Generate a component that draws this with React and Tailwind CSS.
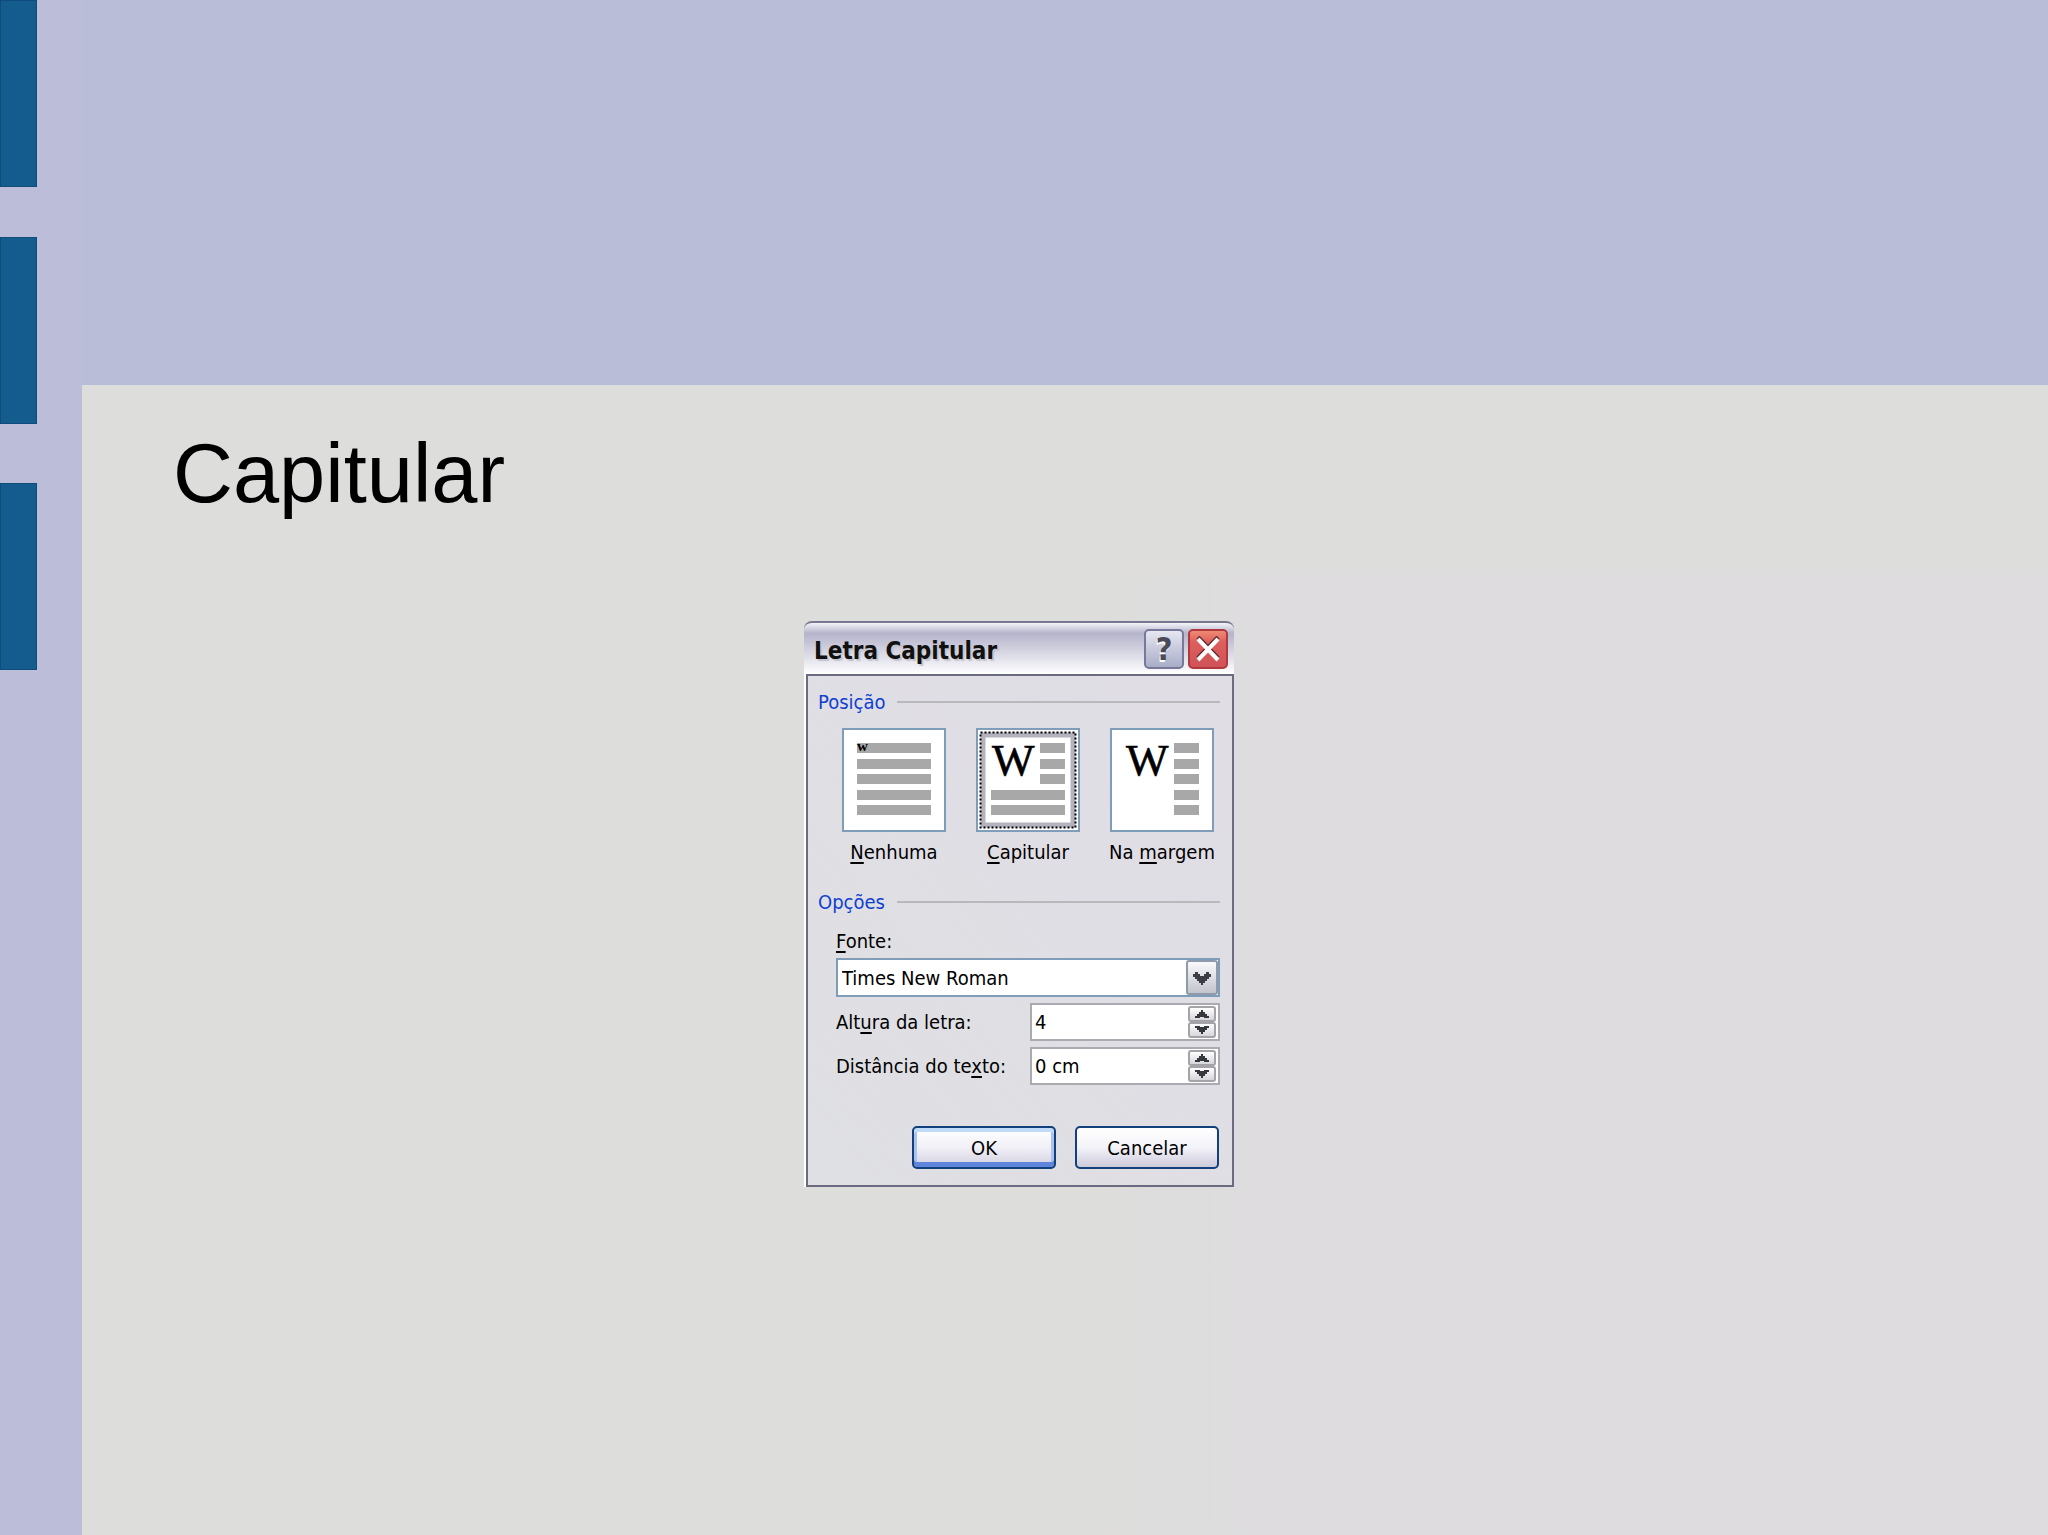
import React, { useState } from "react";

const POSITIONS = [
  { id: "none", before: "", key: "N", after: "enhuma" },
  { id: "dropped", before: "", key: "C", after: "apitular" },
  { id: "margin", before: "Na ", key: "m", after: "argem" },
];

const ROWS = [15, 31, 46, 62, 77];

function Mnemonic({ before = "", letter, after }) {
  return (
    <>
      {before}
      <span className="underline decoration-2 underline-offset-[3px]">{letter}</span>
      {after}
    </>
  );
}

function PositionPicture({ id, selected }) {
  return (
    <svg viewBox="0 0 104 104" className="block size-[104px]" aria-hidden="true">
      <rect x="1" y="1" width="102" height="102" fill="#fff" stroke="#7f9db9" strokeWidth="2" />
      {selected && (
        <>
          <rect x="7" y="7" width="90" height="90" fill="none" stroke="#b3b2bd" strokeWidth="5" />
          <rect
            x="4.5"
            y="4.5"
            width="95"
            height="95"
            fill="none"
            stroke="#000"
            strokeWidth="2"
            strokeDasharray="2 2"
          />
        </>
      )}
      {ROWS.map((y, idx) => {
        const short = id === "margin" || (id === "dropped" && idx < 3);
        return (
          <rect key={y} x={short ? 64 : 15} y={y} width={short ? 25 : 74} height="10" fill="#a8a8a8" />
        );
      })}
      {id === "none" ? (
        <text x="15" y="23" fontFamily="Liberation Serif" fontWeight="bold" fontSize="15">
          w
        </text>
      ) : (
        <text
          x="16"
          y="47"
          fontFamily="Liberation Serif"
          fontSize="45"
          stroke="#000"
          strokeWidth="0.6"
        >
          W
        </text>
      )}
    </svg>
  );
}

function SectionTitle({ children }) {
  return (
    <div className="flex items-center gap-3">
      <h2 className="text-[#0f3fd0]">{children}</h2>
      <div className="h-[2px] flex-1 bg-[#b9b9bb]" />
    </div>
  );
}

function SpinButton({ up, label, onClick }) {
  return (
    <button
      type="button"
      aria-label={label}
      onClick={onClick}
      className="flex h-4 w-7 items-center justify-center rounded-[3px] border-2 border-[#a3a3a8] bg-linear-to-b from-white to-[#d6d6dc]"
    >
      <svg viewBox="0 0 14 8" className="h-2 w-[14px]" aria-hidden="true">
        <path
          d={up ? "M6 0h2v2h2v2h2v2h2v2H9V7H5v1H0V6h2V4h2V2h2z" : "M6 8h2V6h2V4h2V2h2V0H9v1H5V0H0v2h2v2h2v2h2z"}
          fill="#35383d"
        />
      </svg>
    </button>
  );
}

function Spinner({ id, value, onChange, onStep }) {
  return (
    <div className="flex h-[38px] w-[190px] items-center border-2 border-[#a9abb0] bg-white pr-[2px]">
      <input
        id={id}
        type="text"
        value={value}
        onChange={(e) => onChange(e.target.value)}
        className="min-w-0 flex-1 bg-transparent pl-[3px] outline-none"
      />
      <div className="flex flex-col">
        <SpinButton up label="Aumentar" onClick={() => onStep(1)} />
        <SpinButton label="Diminuir" onClick={() => onStep(-1)} />
      </div>
    </div>
  );
}

function DropCapDialog() {
  const [position, setPosition] = useState("dropped");
  const [font, setFont] = useState("Times New Roman");
  const [lines, setLines] = useState("4");
  const [distance, setDistance] = useState("0 cm");

  return (
    <section
      aria-label="Letra Capitular"
      className="w-[430px] font-['DejaVu_Sans_Condensed','DejaVu_Sans',sans-serif] text-[20px] leading-6 text-black"
    >
      <header className="flex h-[53px] items-center gap-1 rounded-t-lg border-t-2 border-[#77778f] bg-linear-to-b from-[#f4f4fa] via-[#b5b4cb] via-20% to-white pr-[6px] pl-[10px]">
        <h2 className="flex-1 pt-1 text-[24px] font-bold text-[#111] [text-shadow:2px_2px_1px_#c4c4cc]">
          Letra Capitular
        </h2>
        <button
          type="button"
          aria-label="Ajuda"
          className="flex size-10 items-center justify-center rounded-[5px] border-2 border-[#77789a] bg-linear-to-b from-[#e6e7f1] to-[#a9adc8] text-[32px] font-bold text-[#4a4a58] [text-shadow:-1px_2px_0_#fff]"
        >
          ?
        </button>
        <button
          type="button"
          aria-label="Fechar"
          className="flex size-10 items-center justify-center rounded-[5px] border-2 border-[#b0383f] bg-linear-to-b from-[#f08a74] via-[#dd5f5c] via-30% to-[#cf5358]"
        >
          <svg viewBox="0 0 26 26" className="size-[26px]" aria-hidden="true">
            <path d="M3 1 23 22M23 1 3 22" fill="none" stroke="#5b2a30" strokeWidth="4" />
            <path d="M3 3 23 24M23 3 3 24" fill="none" stroke="#fff" strokeWidth="4" />
          </svg>
        </button>
      </header>

      <div className="border-l-2 border-white">
        <div className="border-2 border-[#6a6a80] bg-linear-to-tr from-[#dfe0e3] to-[#e0dde5] pt-[14px] pr-3 pb-4 pl-[10px]">
          <SectionTitle>Posição</SectionTitle>
          <fieldset aria-label="Posição" className="mt-[14px] flex justify-between pr-[6px] pl-6">
            {POSITIONS.map((p) => (
              <label
                key={p.id}
                className="flex w-[104px] flex-col items-center gap-2 whitespace-nowrap"
              >
                <input
                  type="radio"
                  name="position"
                  className="sr-only"
                  checked={position === p.id}
                  onChange={() => setPosition(p.id)}
                />
                <PositionPicture id={p.id} selected={position === p.id} />
                <span>
                  <Mnemonic before={p.before} letter={p.key} after={p.after} />
                </span>
              </label>
            ))}
          </fieldset>

          <div className="mt-[26px]">
            <SectionTitle>Opções</SectionTitle>
          </div>
          <div className="mt-[15px] flex flex-col pl-[18px]">
            <label htmlFor="font">
              <Mnemonic letter="F" after="onte:" />
            </label>
            <div className="relative mt-[5px] h-[39px] border-2 border-[#7f9db9] bg-white">
              <select
                id="font"
                value={font}
                onChange={(e) => setFont(e.target.value)}
                className="size-full appearance-none bg-transparent pl-1 outline-none"
              >
                <option>Times New Roman</option>
                <option>Arial</option>
              </select>
              <span className="pointer-events-none absolute top-0 right-0 flex h-[35px] w-8 items-center justify-center rounded-[3px] border-2 border-[#8f9bab] bg-linear-to-b from-[#fafafc] to-[#c3c4cd]">
                <svg viewBox="0 0 18 14" className="h-[14px] w-[18px]" aria-hidden="true">
                  <path
                    d="M2 1h3v2h2v2h4V3h2V1h3v2h2v3h-2v2h-2v2h-2v2h-2v2H8v-2H6v-2H4V8H2V6H0V3h2z"
                    fill="#3b3e45"
                  />
                </svg>
              </span>
            </div>
            <div className="mt-[6px] flex items-center justify-between">
              <label htmlFor="lines">
                <Mnemonic before="Alt" letter="u" after="ra da letra:" />
              </label>
              <Spinner
                id="lines"
                value={lines}
                onChange={setLines}
                onStep={(d) => setLines(String(Math.max(1, parseInt(lines, 10) + d)))}
              />
            </div>
            <div className="mt-[6px] flex items-center justify-between">
              <label htmlFor="distance">
                <Mnemonic before="Distância do te" letter="x" after="to:" />
              </label>
              <Spinner
                id="distance"
                value={distance}
                onChange={setDistance}
                onStep={(d) => setDistance(`${Math.max(0, parseInt(distance, 10) + d)} cm`)}
              />
            </div>
          </div>

          <div className="mt-[41px] flex justify-end gap-[19px] pr-[1px]">
            <button
              type="button"
              className="h-[43px] w-36 rounded-[5px] border-2 border-[#12407a] bg-linear-to-b from-white via-[#f1f0f7] to-[#d3d0e0] shadow-[inset_0_4px_0_#c2dbf8,inset_0_-5px_0_#5f86dc,inset_3px_0_0_#a9c4f0,inset_-3px_0_0_#a9c4f0]"
            >
              OK
            </button>
            <button
              type="button"
              className="h-[43px] w-36 rounded-[5px] border-2 border-[#12407a] bg-linear-to-b from-white via-[#f4f3f9] to-[#cdcadb]"
            >
              Cancelar
            </button>
          </div>
        </div>
      </div>
    </section>
  );
}

export default function App() {
  return (
    <div className="flex min-h-screen bg-[#babdd8]">
      <aside className="flex w-[82px] flex-col bg-[#bcbdd8]">
        <div className="h-[187px] w-[37px] border border-[#0f4c7c] bg-[#145c8e]" />
        <div className="mt-[50px] h-[187px] w-[37px] border border-[#0f4c7c] bg-[#145c8e]" />
        <div className="mt-[59px] h-[187px] w-[37px] border border-[#0f4c7c] bg-[#145c8e]" />
      </aside>
      <main className="mt-[385px] flex-1 bg-[linear-gradient(#dddddb_170px,transparent_200px),linear-gradient(90deg,#dddddb_50%,#dedcdf_62%)] pt-[41px] pl-[91px]">
        <h1 className="font-['Liberation_Sans',Arial,sans-serif] text-[83px] leading-[96px] text-black">
          Capitular
        </h1>
        <div className="mt-[99px] ml-[631px]">
          <DropCapDialog />
        </div>
      </main>
    </div>
  );
}
